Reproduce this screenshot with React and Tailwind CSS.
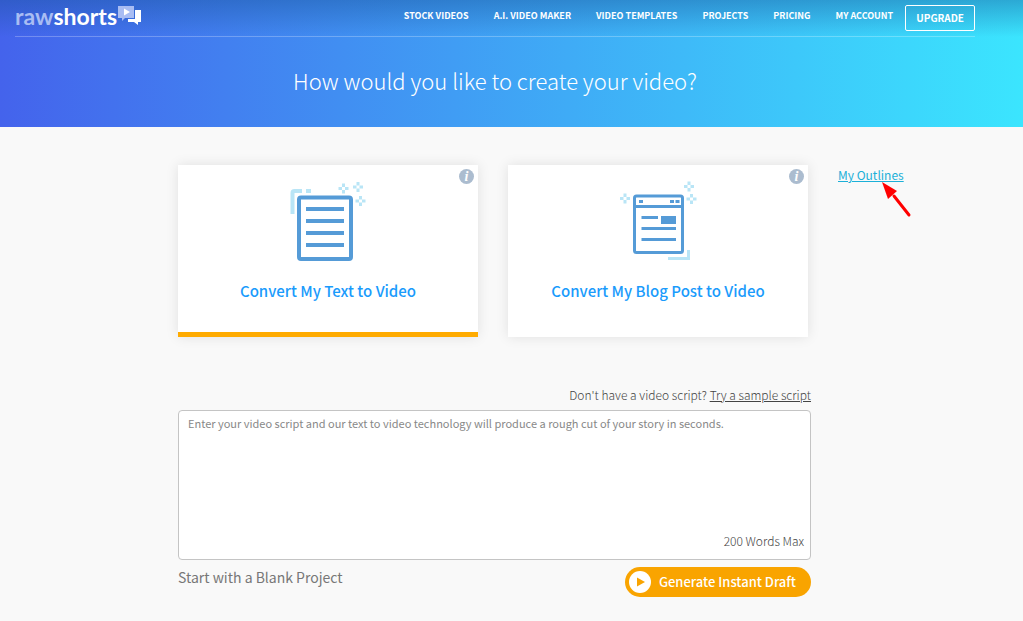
import { useState } from "react";

const navLinks = [
  "STOCK VIDEOS",
  "A.I. VIDEO MAKER",
  "VIDEO TEMPLATES",
  "PROJECTS",
  "PRICING",
  "MY ACCOUNT",
];

const Sparkle = ({ x, y }) => (
  <g transform={`translate(${x} ${y})`} fill="#b9e5f6">
    <rect x="-1.5" y="-5" width="3" height="3.5" />
    <rect x="-1.5" y="1.5" width="3" height="3.5" />
    <rect x="-5" y="-1.5" width="3.5" height="3" />
    <rect x="1.5" y="-1.5" width="3.5" height="3" />
  </g>
);

const TextIcon = () => (
  <svg width="100" height="95" viewBox="3 0 100 95" fill="none" aria-hidden="true">
    <path d="M17.500 39V18Q17.500 16 19.500 16H27M31 16H36" stroke="#b9e5f6" strokeWidth="4" />
    <rect x="24" y="22.5" width="52" height="61.5" rx="2" stroke="#559bd7" strokeWidth="4" />
    <path d="M31 34H69M31 46H69M31 58H69M31 70H69" stroke="#559bd7" strokeWidth="4" />
    <Sparkle x={68.5} y={13.5} />
    <Sparkle x={83} y={12} />
    <Sparkle x={85.5} y={26} />
  </svg>
);

const BlogIcon = () => (
  <svg width="100" height="95" viewBox="-2 0 100 95" fill="none" aria-hidden="true">
    <path d="M58 83.5H78.500V75" stroke="#b9e5f6" strokeWidth="3" />
    <rect x="24.500" y="21" width="48" height="56.500" rx="2" stroke="#559bd7" strokeWidth="3" />
    <path d="M24 31.500H73" stroke="#559bd7" strokeWidth="3" />
    <path d="M29 26.500H33M60 26.500H64M65.500 26.500H69.500" stroke="#559bd7" strokeWidth="3" />
    <path d="M31.500 42.500H48M31.500 53.500H66M31.500 64.500H66" stroke="#559bd7" strokeWidth="3" />
    <rect x="51" y="41" width="15" height="8" fill="#559bd7" />
    <Sparkle x={15} y={23.5} />
    <Sparkle x={79} y={11.5} />
    <Sparkle x={81.5} y={24} />
  </svg>
);

const LogoMark = () => (
  <svg width="24" height="21" viewBox="0 0 24 21" aria-hidden="true">
    <path d="M18 6H24V18H21V21L17 18H11V15H18Z" fill="#fff" />
    <path d="M1 2H17V14H8L5 17V14H1Z" fill="#a9bdf3" />
    <path d="M7 4.500L13 8L7 11.500Z" fill="#fff" />
  </svg>
);

const InfoButton = ({ label }) => (
  <button
    type="button"
    aria-label={label}
    className="absolute right-1 top-1 flex h-[15px] w-[15px] items-center justify-center rounded-full bg-[#abbccf] font-['Liberation_Serif',serif] text-sm font-bold italic leading-none text-white"
  >
    i
  </button>
);

const OptionCard = ({ title, icon, active, onSelect }) => (
  <div
    className={`relative h-[172px] flex-1 border-b-[5px] bg-white shadow-[0_0_12px_rgba(0,0,0,0.1)] ${
      active ? "border-[#ffab00]" : "border-white"
    }`}
  >
    <button
      type="button"
      onClick={onSelect}
      className="flex h-full w-full flex-col items-center pt-[10px]"
    >
      {icon}
      <span className="mt-[7px] text-[15px] font-medium leading-7 text-[#1a9bfc]">{title}</span>
    </button>
    <InfoButton label={`About ${title}`} />
  </div>
);

const Header = () => (
  <header className="h-[127px] bg-linear-to-r/srgb from-[#4463ec] to-[#3be5fe] text-white">
    <div className="bg-linear-to-b/srgb from-[#145096]/40 to-[#145096]/0 pl-[15px] pr-12">
      <div className="flex h-[37px] items-start justify-between border-b border-white/25">
        <a href="#" className="flex items-start pt-1 font-['Lato',sans-serif] text-[23px] font-bold leading-6">
          <span className="text-[#a9bdf3]">raw</span>
          <span>shorts</span>
          <LogoMark />
        </a>
        <nav className="flex items-start whitespace-nowrap text-[10px] font-bold leading-6">
          <ul className="mr-3 flex gap-[25px] pt-1 text-[9px]">
            {navLinks.map((link) => (
              <li key={link}>
                <a href="#">{link}</a>
              </li>
            ))}
          </ul>
          <a href="#" className="mt-[5px] rounded-xs border border-white px-[10px]">
            UPGRADE
          </a>
        </nav>
      </div>
    </div>
    <h1 className="pl-[15px] pr-12 pt-[27px] text-center text-[22px] font-light leading-8">
      How would you like to create your video?
    </h1>
  </header>
);

const App = () => {
  const [mode, setMode] = useState("text");
  const [script, setScript] = useState("");

  return (
    <div className="min-h-screen bg-[#f9f9f9] font-['Noto_Sans_CJK_SC',sans-serif]">
      <Header />
      <main className="grid grid-cols-[1fr_633px_1fr] pb-6 pl-[14px] pr-12 pt-[38px]">
        <div className="col-start-2 flex gap-[30px] pr-[3px]">
          <OptionCard
            title="Convert My Text to Video"
            icon={<TextIcon />}
            active={mode === "text"}
            onSelect={() => setMode("text")}
          />
          <OptionCard
            title="Convert My Blog Post to Video"
            icon={<BlogIcon />}
            active={mode === "blog"}
            onSelect={() => setMode("blog")}
          />
        </div>
        <div className="relative pl-[27px]">
          <a href="#" className="block text-xs leading-5 text-[#1cb0d8] underline">
            My Outlines
          </a>
          <svg
            width="32"
            height="38"
            viewBox="0 0 32 38"
            aria-hidden="true"
            className="absolute left-[70px] top-4"
          >
            <path d="M13 15L28 34" stroke="#f00" strokeWidth="3" strokeLinecap="round" />
            <path d="M1 1L16 10L7 18Z" fill="#f00" />
          </svg>
        </div>

        <div className="col-start-2 mt-12">
          <p className="text-right text-xs font-light leading-5 text-[#444]">
            Don't have a video script?{" "}
            <a href="#" className="underline">
              Try a sample script
            </a>
          </p>
          <div className="relative mt-[5px]">
            <textarea
              aria-label="Video script"
              value={script}
              onChange={(e) => setScript(e.target.value)}
              placeholder="Enter your video script and our text to video technology will produce a rough cut of your story in seconds."
              className="block h-[150px] w-full resize-none rounded-sm border border-[#c4c4c4] bg-white px-[9px] py-[3px] text-[11px] leading-[18px] placeholder:text-[#888]"
            />
            <span className="absolute bottom-[9px] right-[7px] text-xs font-light leading-5 text-[#444]">
              200 Words Max
            </span>
          </div>
          <div className="mt-[7px] flex items-start justify-between">
            <a href="#" className="text-sm leading-5 text-[#777]">
              Start with a Blank Project
            </a>
            <button
              type="button"
              className="flex h-[30px] items-center gap-2 rounded-full bg-[#f9a400] pl-1 pr-[15px] text-[13px] font-medium text-white"
            >
              <svg width="22" height="22" viewBox="0 0 22 22" aria-hidden="true">
                <circle cx="11" cy="11" r="11" fill="#fff" />
                <path d="M8 6.500L16 11L8 15.500Z" fill="#f9a400" />
              </svg>
              Generate Instant Draft
            </button>
          </div>
        </div>
      </main>
    </div>
  );
};

export default App;
